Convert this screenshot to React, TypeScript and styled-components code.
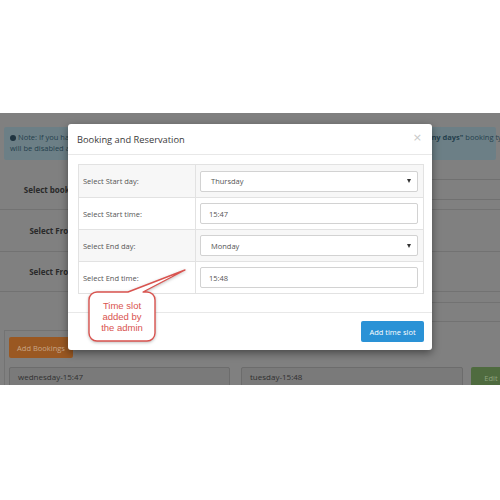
import styled, { createGlobalStyle } from "styled-components";

const GlobalStyle = createGlobalStyle`
    body {
        margin: 0;
        background: #ffffff;
        font-family: "Open Sans", "Liberation Sans", sans-serif;
    }
`;

const Page = styled.div`
    width: 500px;
    height: 500px;
    display: flex;
    flex-direction: column;
    overflow: hidden;
`;

const TopGap = styled.div`
    height: 113px;
    flex: none;
`;

// dimmed page behind the modal, colours already darkened by the backdrop
const Stage = styled.div`
    position: relative;
    height: 272px;
    flex: none;
    background: #808080;
    overflow: hidden;
`;

const Alert = styled.div`
    margin: 14px 4px 0;
    height: 33px;
    box-sizing: border-box;
    padding: 5px 6px;
    background: #6c7f86;
    border-radius: 2px;
    color: #24404d;
    font-size: 7.5px;
    line-height: 11px;
    white-space: nowrap;
`;

const AlertLine = styled.div`
    display: flex;
    align-items: center;
`;

const Lead = styled.span`
    flex: none;
    width: 406px;
    overflow: hidden;
`;

const InfoDot = styled.span`
    display: inline-block;
    width: 6px;
    height: 6px;
    margin-right: 2px;
    border-radius: 50%;
    background: #1f3440;
    vertical-align: -1px;
`;

const FormRows = styled.div`
    margin-top: 10px;
`;

const FormRow = styled.div<{ $h: number }>`
    height: ${(p) => p.$h}px;
    display: flex;
    align-items: center;
    border-bottom: 1px solid #727272;
    box-sizing: border-box;
`;

const RowLabel = styled.div`
    width: 120px;
    padding-left: 4px;
    text-align: center;
    font-size: 8px;
    font-weight: 700;
    color: #2a2a2a;
`;

const RowField = styled.div`
    flex: 1;
    padding-left: 100px;
`;

const FakeInput = styled.div`
    height: 21px;
    box-sizing: border-box;
    border-top: 1px solid #707070;
    border-bottom: 1px solid #707070;
`;

const SubBar = styled.div`
    margin: 10px 0 0 240px;
    height: 20px;
    box-sizing: border-box;
    border-top: 1px solid #727272;
    border-bottom: 1px solid #727272;
`;

const ListArea = styled.div`
    margin: 8px 0 0 4px;
    display: grid;
    grid-template-columns: 231px 1fr;
    gap: 5px;
`;

const Panel = styled.div<{ $bordered?: boolean }>`
    border: 1px solid ${(p) => (p.$bordered ? "#737373" : "transparent")};
    border-right: none;
    padding: 6px ${(p) => (p.$bordered ? 4 : 0)}px 0;
    height: 60px;
    box-sizing: border-box;
`;

const AddButton = styled.div`
    width: 64px;
    height: 21px;
    border-radius: 2px;
    background: #9a5822;
    color: #c9a788;
    font-size: 7.5px;
    display: flex;
    align-items: center;
    justify-content: center;
`;

const SlotRow = styled.div<{ $offset?: number }>`
    margin-top: ${(p) => p.$offset ?? 9}px;
    display: flex;
    gap: 10px;
`;

const SlotBox = styled.div<{ $w: number }>`
    width: ${(p) => p.$w}px;
    height: 22px;
    box-sizing: border-box;
    padding: 3px 8px;
    background: #7a7a7a;
    border: 1px solid #6c6c6c;
    border-radius: 2px;
    color: #303030;
    font-size: 8px;
`;

const EditButton = styled.div`
    width: 40px;
    height: 22px;
    margin-left: -2px;
    border-radius: 2px;
    background: #4f6b3f;
    color: #8fa580;
    font-size: 7.5px;
    display: flex;
    align-items: center;
    justify-content: center;
`;

const Modal = styled.div`
    position: absolute;
    left: 68px;
    top: 11px;
    width: 364px;
    background: #ffffff;
    border-radius: 3px;
    box-shadow: 0 3px 9px rgba(0, 0, 0, 0.45);
`;

const ModalHeader = styled.div`
    height: 31px;
    box-sizing: border-box;
    padding: 0 10px 0 9px;
    border-bottom: 1px solid #e8e8e8;
    display: flex;
    align-items: center;
    justify-content: space-between;
`;

const ModalTitle = styled.h4`
    margin: 0;
    font-size: 9.3px;
    font-weight: 400;
    color: #3a3a3a;
`;

const Close = styled.span`
    font-size: 11px;
    color: #c8c8c8;
    font-family: "DejaVu Sans", sans-serif;
    margin-top: -4px;
`;

const ModalBody = styled.div`
    padding: 9px 8px 18px 10px;
`;

const Table = styled.div`
    border: 1px solid #e2e2e2;
`;

const TableRow = styled.div<{ $striped?: boolean }>`
    height: 32px;
    box-sizing: border-box;
    display: grid;
    grid-template-columns: 117px 1fr;
    background: ${(p) => (p.$striped ? "#f7f7f7" : "#ffffff")};
    & + & {
        border-top: 1px solid #e2e2e2;
    }
`;

const LabelCell = styled.div`
    display: flex;
    align-items: center;
    padding-left: 4px;
    border-right: 1px solid #e2e2e2;
    font-size: 7.5px;
    color: #555555;
`;

const FieldCell = styled.div`
    display: flex;
    align-items: center;
    padding: 0 5px 0 4px;
`;

const Control = styled.div<{ $select?: boolean }>`
    flex: 1;
    height: 21px;
    box-sizing: border-box;
    padding: 0 6px 0 ${(p) => (p.$select ? 10 : 8)}px;
    border: 1px solid #d2d2d2;
    border-radius: 2px;
    background: #ffffff;
    display: flex;
    align-items: center;
    justify-content: space-between;
    font-size: 7.5px;
    color: #555555;
`;

const Caret = styled.span`
    width: 0;
    height: 0;
    border-left: 2.5px solid transparent;
    border-right: 2.5px solid transparent;
    border-top: 4px solid #333333;
`;

const ModalFooter = styled.div`
    border-top: 1px solid #e8e8e8;
    padding: 8px 8px 8px 9px;
    display: flex;
    justify-content: flex-end;
`;

const PrimaryButton = styled.button`
    height: 21px;
    width: 63px;
    padding: 0;
    border: none;
    border-radius: 2px;
    background: #2a92d6;
    color: #ffffff;
    font-family: "Open Sans", "Liberation Sans", sans-serif;
    font-size: 7.5px;
`;

const Callout = styled.div`
    position: absolute;
    left: 18px;
    top: 142px;
    width: 110px;
    height: 80px;
`;

const CalloutShape = styled.svg`
    position: absolute;
    inset: 0;
    overflow: visible;
    filter: drop-shadow(0 1px 1.5px rgba(0, 0, 0, 0.25));
`;

const CalloutText = styled.div`
    position: absolute;
    left: 3px;
    top: 26px;
    width: 66px;
    height: 49px;
    display: flex;
    align-items: center;
    justify-content: center;
    text-align: center;
    font-family: "Liberation Sans", Arial, sans-serif;
    font-size: 9.5px;
    line-height: 11px;
    color: #d9534f;
`;

const rows = [
    { label: "Select Start day:", value: "Thursday", select: true },
    { label: "Select Start time:", value: "15:47" },
    { label: "Select End day:", value: "Monday", select: true },
    { label: "Select End time:", value: "15:48" },
];

export default function App() {
    return (
        <>
            <GlobalStyle />
            <Page>
                <TopGap />
                <Stage>
                    <Alert>
                        <AlertLine>
                            <Lead>
                                <InfoDot />
                                Note: If you have added time slots and then switch the booking type to the
                            </Lead>
                            <b>"many days"</b>&nbsp;booking type, the slots
                        </AlertLine>
                        <AlertLine>will be disabled and kept until the booking type is changed back.</AlertLine>
                    </Alert>
                    <FormRows>
                        <FormRow $h={40}>
                            <RowLabel>Select booking type:</RowLabel>
                            <RowField>
                                <FakeInput />
                            </RowField>
                        </FormRow>
                        <FormRow $h={42}>
                            <RowLabel>Select From date:</RowLabel>
                            <RowField />
                        </FormRow>
                        <FormRow $h={40}>
                            <RowLabel>Select From time:</RowLabel>
                            <RowField />
                        </FormRow>
                    </FormRows>
                    <SubBar />
                    <ListArea>
                        <Panel $bordered>
                            <AddButton>Add Bookings</AddButton>
                            <SlotRow>
                                <SlotBox $w={221}>wednesday-15:47</SlotBox>
                            </SlotRow>
                        </Panel>
                        <Panel>
                            <SlotRow $offset={30}>
                                <SlotBox $w={222}>tuesday-15:48</SlotBox>
                                <EditButton>Edit</EditButton>
                            </SlotRow>
                        </Panel>
                    </ListArea>
                    <Modal>
                        <ModalHeader>
                            <ModalTitle>Booking and Reservation</ModalTitle>
                            <Close>×</Close>
                        </ModalHeader>
                        <ModalBody>
                            <Table>
                                {rows.map((r, i) => (
                                    <TableRow key={r.label} $striped={i % 2 === 0}>
                                        <LabelCell>{r.label}</LabelCell>
                                        <FieldCell>
                                            <Control $select={r.select}>
                                                {r.value}
                                                {r.select && <Caret />}
                                            </Control>
                                        </FieldCell>
                                    </TableRow>
                                ))}
                            </Table>
                        </ModalBody>
                        <ModalFooter>
                            <PrimaryButton>Add time slot</PrimaryButton>
                        </ModalFooter>
                        <Callout>
                            <CalloutShape width="110" height="80" viewBox="0 0 110 80">
                                <path
                                    d="M 11 26 H 42 L 99 4 L 57 26 H 61 A 8 8 0 0 1 69 34 V 67 A 8 8 0 0 1 61 75 H 11 A 8 8 0 0 1 3 67 V 34 A 8 8 0 0 1 11 26 Z"
                                    fill="#ffffff"
                                    stroke="#d9534f"
                                    strokeWidth="1.4"
                                    strokeLinejoin="round"
                                />
                            </CalloutShape>
                            <CalloutText>
                                Time slot
                                <br />
                                added by
                                <br />
                                the admin
                            </CalloutText>
                        </Callout>
                    </Modal>
                </Stage>
            </Page>
        </>
    );
}
